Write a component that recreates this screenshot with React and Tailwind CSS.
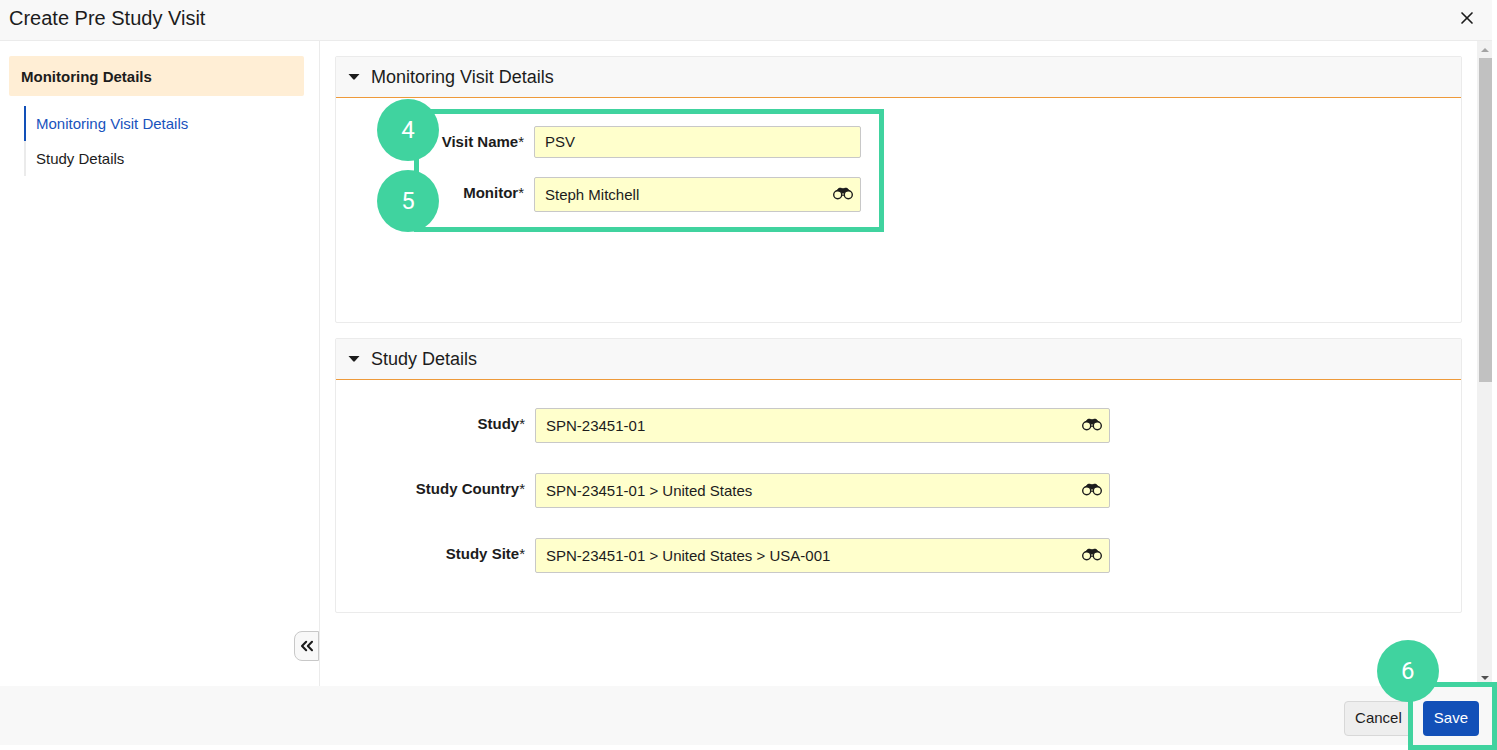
import { ChevronsLeft, X } from "lucide-react";

const Binoculars = () => (
  <svg width="20" height="14" viewBox="0 0 20 14" fill="none" aria-hidden="true">
    <path
      d="M2 4.800 4.800 2C5.500.8 7.800.4 8.800 1.300h2.400C12.200.4 14.500.8 15.200 2L18 4.800 15.500 4l-3.300 1.200-.6 3.600H8.400l-.6-3.600L4.500 4Z"
      fill="#1c1c1c"
    />
    <circle cx="4.700" cy="7.800" r="4" fill="#ffffcc" stroke="#1c1c1c" strokeWidth="1.400" />
    <circle cx="15.300" cy="7.800" r="4" fill="#ffffcc" stroke="#1c1c1c" strokeWidth="1.400" />
    <path d="M4 3.500 5.500 1.800h9L16 3.500l-3.500 1.200h-5Z" fill="#1c1c1c" />
    <circle cx="10" cy="7" r=".8" fill="#ffffcc" />
  </svg>
);

const Step = ({ number, className }) => (
  <span
    className={`absolute z-20 flex size-[62px] items-center justify-center rounded-full bg-[#40d39f] font-['Roboto',sans-serif] text-2xl text-white ${className}`}
  >
    {number}
  </span>
);

const Field = ({ id, label, value, lookup = false, labelWidth, width }) => (
  <div className="flex items-start gap-2.5">
    <label htmlFor={id} className={`shrink-0 text-right leading-8 font-bold ${labelWidth}`}>
      {label}
      <span className="font-normal">*</span>
    </label>
    <div className={`relative w-full ${width}`}>
      <input
        id={id}
        type="text"
        defaultValue={value}
        className={`block w-full rounded-xs border border-[#c8c8c8] bg-[#ffffcc] pl-2.5 outline-none ${lookup ? "h-[35px] pr-10" : "h-8 pr-2.5 pb-0.5"}`}
      />
      {lookup && (
        <button type="button" aria-label={`Search ${label}`} className="absolute top-2.5 right-2">
          <Binoculars />
        </button>
      )}
    </div>
  </div>
);

const Panel = ({ title, children }) => (
  <section className="rounded-xs border border-[#ebebeb]">
    <h2 className="border-b border-[#ee9a3a] bg-[#f8f8f8]">
      <button type="button" className="flex h-10 w-full items-center gap-[11px] pl-3 text-lg">
        <svg width="12" height="6" viewBox="0 0 12 6" aria-hidden="true">
          <path d="M.5 0h11L6.800 5.300Q6 6 5.200 5.300Z" fill="#1c1c1c" />
        </svg>
        {title}
      </button>
    </h2>
    {children}
  </section>
);

const Scrollbar = () => (
  <div className="flex w-[15px] shrink-0 flex-col items-end bg-[#f1f1f1]" aria-hidden="true">
    <div className="flex h-[17px] w-full items-center justify-center">
      <svg width="8" height="4" viewBox="0 0 8 4">
        <path d="M0 4 4 0l4 4Z" fill="#a3a3a3" />
      </svg>
    </div>
    <div className="w-full flex-1 pl-0.5">
      <div className="h-[53%] bg-[#c1c1c1]" />
    </div>
    <div className="flex h-[17px] w-full items-center justify-center">
      <svg width="8" height="4" viewBox="0 0 8 4">
        <path d="M0 0h8L4 4Z" fill="#505050" />
      </svg>
    </div>
  </div>
);

const App = () => (
  <div className="flex h-screen flex-col bg-white pr-[5px] pb-[5px] font-['Liberation_Sans',Arial,sans-serif] text-[15px] text-[#1c1c1c]">
    <header className="flex h-[41px] shrink-0 items-center justify-between border-b border-[#ebebeb] bg-[#f8f8f8] pr-[15px] pb-1 pl-[9px]">
      <h1 className="text-xl">Create Pre Study Visit</h1>
      <button type="button" aria-label="Close">
        <X size={20} strokeWidth={2} />
      </button>
    </header>

    <div className="flex min-h-0 flex-1">
      <aside className="relative w-80 shrink-0 border-r border-[#ebebeb] pt-[15px] pr-[15px] pl-[9px]">
        <h2 className="rounded-xs bg-[#ffeed5] px-3 pt-px leading-[39px] font-bold">Monitoring Details</h2>
        <nav className="mt-2.5 ml-[15px] flex flex-col leading-[35px]">
          <a href="#visit" className="border-l-2 border-[#1250b8] pl-2.5 text-[#1853bd]">
            Monitoring Visit Details
          </a>
          <a href="#study" className="border-l-2 border-[#ebebeb] pl-2.5">
            Study Details
          </a>
        </nav>
        <button
          type="button"
          aria-label="Collapse sidebar"
          className="absolute right-0 bottom-[25px] flex h-[30px] w-[25px] items-center justify-center rounded-l-lg border border-[#c8c8c8] bg-[#f8f8f8]"
        >
          <ChevronsLeft size={20} strokeWidth={2.5} />
        </button>
      </aside>

      <main className="flex min-w-0 flex-1 flex-col gap-[15px] overflow-hidden p-[15px]">
        <Panel title="Monitoring Visit Details">
          <div id="visit" className="min-h-56 pt-7">
            <div className="relative flex max-w-[525px] flex-col gap-[19px]">
              <div className="pointer-events-none absolute -top-[17px] -right-[23px] -bottom-5 left-[78px] border-5 border-[#40d39f]" />
              <Step number={4} className="-top-[27px] left-[41px]" />
              <Step number={5} className="top-11 left-[41px]" />
              <Field id="visit-name" label="Visit Name" value="PSV" labelWidth="w-[188px]" width="max-w-[327px]" />
              <Field
                id="monitor"
                label="Monitor"
                value="Steph Mitchell"
                lookup
                labelWidth="w-[188px]"
                width="max-w-[327px]"
              />
            </div>
          </div>
        </Panel>

        <Panel title="Study Details">
          <div id="study" className="flex flex-col gap-[30px] pt-7 pb-[39px]">
            <Field
              id="study-name"
              label="Study"
              value="SPN-23451-01"
              lookup
              labelWidth="w-[189px]"
              width="max-w-[575px]"
            />
            <Field
              id="country"
              label="Study Country"
              value="SPN-23451-01 > United States"
              lookup
              labelWidth="w-[189px]"
              width="max-w-[575px]"
            />
            <Field
              id="site"
              label="Study Site"
              value="SPN-23451-01 > United States > USA-001"
              lookup
              labelWidth="w-[189px]"
              width="max-w-[575px]"
            />
          </div>
        </Panel>
      </main>
      <Scrollbar />
    </div>

    <footer className="flex h-[59px] shrink-0 items-center justify-end gap-2.5 bg-[#f8f8f8] pt-[5px] pr-[13px]">
      <button
        type="button"
        className="h-[35px] rounded-sm border border-[#d8d8d8] bg-[#eeeeee] px-2.5 pt-px"
      >
        Cancel
      </button>
      <div className="relative">
        <div className="pointer-events-none absolute -top-[19px] -right-[18px] -bottom-[14px] -left-[15px] z-10 border-5 border-[#40d39f]" />
        <Step number={6} className="-top-[61px] -left-[46px]" />
        <button type="button" className="h-[35px] rounded-sm bg-[#1250b8] px-[11px] pt-px text-white">
          Save
        </button>
      </div>
    </footer>
  </div>
);

export default App;
